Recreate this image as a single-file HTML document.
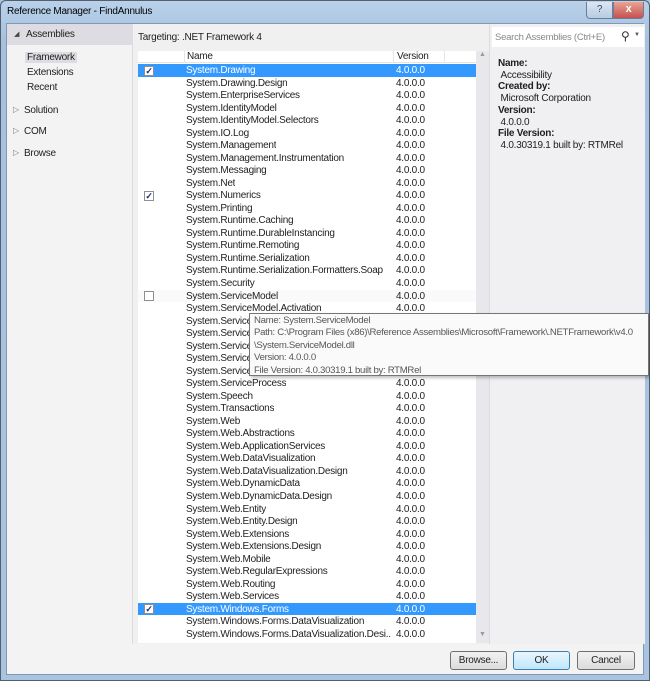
<!DOCTYPE html>
<html><head><meta charset="utf-8"><style>
*{margin:0;padding:0;box-sizing:border-box}
body{width:650px;height:681px;overflow:hidden;font-family:"Liberation Sans",sans-serif;font-size:10px;letter-spacing:-0.25px;color:#1e1e1e;background:#a9c4e0}
.frame{position:absolute;left:0;top:0;width:650px;height:681px;background:linear-gradient(180deg,#b9d1ea 0,#a6c1df 40px,#a9c4e1 100%);border:1px solid #555f6c;border-radius:6px 6px 0 0}
.title{position:absolute;left:6px;top:5px;color:#000}
.hbtn{position:absolute;top:1px;height:17px;border:1px solid #6d7e94;border-top:none}
.client{position:absolute;left:6px;top:23px;width:638px;height:652px;background:#f0f0f0;border:1px solid #8398b4}
.left{position:absolute;left:0;top:0;width:126px;height:620px;background:#f3f3f4;border-right:1px solid #dcdcdc}
.lh{position:absolute;left:0;top:0;width:126px;height:21px;background:#dcdce2}
.t{position:absolute;white-space:nowrap}
.list{position:absolute;left:131px;top:27px;width:338px;height:592px;background:#fff;overflow:hidden}
.row{position:absolute;left:0;width:338px;height:12.53px;line-height:14px}
.row .n{position:absolute;left:48px;max-width:205px;overflow:hidden;white-space:nowrap}
.row .v{position:absolute;left:258px}
.sel{background:#3399ff;color:#fff}
.hov{background:#fafafa}
.cb{position:absolute;left:6px;top:1.5px;width:10px;height:10px;border:1px solid #8f8f8f;background:#fff;font-size:9px;line-height:8px;text-align:center;color:#1b2b7a;font-weight:bold}
.scroll{position:absolute;left:469px;top:27px;width:13px;height:592px;background:#e8e8ec}
.right{position:absolute;left:482px;top:0;width:156px;height:620px;background:#f0f0f2;border-left:1px solid #dcdcdc}
.btn{position:absolute;top:627px;height:19px;border:1px solid #707070;border-radius:3px;background:linear-gradient(#f2f2f2,#dcdcdc);text-align:center;line-height:17px}
.tip{position:absolute;left:249px;top:313px;width:400px;height:63px;background:#fafafa;border:1px solid #767676;box-shadow:2px 2px 3px rgba(0,0,0,.25);color:#575757;padding:1px 4px;line-height:12.4px;font-size:9.6px;letter-spacing:-0.3px;white-space:nowrap;overflow:hidden}
</style></head><body>
<div class="frame">
<div class="title">Reference Manager - FindAnnulus</div>
<div class="hbtn" style="left:585px;width:27px;background:linear-gradient(#dce7f3,#b7cbe2);border-radius:0 0 0 4px;text-align:center;line-height:15px;color:#34496a">?</div>
<div class="hbtn" style="left:612px;width:31px;background:linear-gradient(#e8a493,#c75050);border-radius:0 0 4px 0;text-align:center;color:#fff;font-weight:bold;font-size:11px;line-height:15px">x</div>
</div>
<div class="client">
 <div class="left">
  <div class="lh"></div>
  <div class="t" style="left:7px;top:6px;font-size:7px;color:#444">◢</div>
  <div class="t" style="left:19px;top:5px">Assemblies</div>
  <div class="t" style="top:28px;background:#dcdce2;padding:0 2px;left:18px">Framework</div>
  <div class="t" style="left:20px;top:43px">Extensions</div>
  <div class="t" style="left:20px;top:58px">Recent</div>
  <div class="t" style="left:6px;top:81px;font-size:8px;color:#777">▷</div><div class="t" style="left:17px;top:81px">Solution</div>
  <div class="t" style="left:6px;top:102px;font-size:8px;color:#777">▷</div><div class="t" style="left:17px;top:102px">COM</div>
  <div class="t" style="left:6px;top:124px;font-size:8px;color:#777">▷</div><div class="t" style="left:17px;top:124px">Browse</div>
 </div>
 <div class="t" style="left:131px;top:8px">Targeting: .NET Framework 4</div>
 <div class="list">
  <div style="position:absolute;left:0;top:0;width:338px;height:12px;border-bottom:1px solid #e5e5e5"></div>
  <div style="position:absolute;left:46px;top:0;width:1px;height:12px;background:#e5e5e5"></div>
  <div style="position:absolute;left:255px;top:0;width:1px;height:12px;background:#e5e5e5"></div>
  <div style="position:absolute;left:306px;top:0;width:1px;height:12px;background:#e5e5e5"></div>
  <div class="t" style="left:49px;top:0">Name</div><div class="t" style="left:259px;top:0">Version</div>
  <div id="rows"></div>
 </div>
 <div class="scroll"><div class="t" style="left:3px;top:0;font-size:7px;color:#999">▲</div><div class="t" style="left:3px;top:580px;font-size:7px;color:#999">▼</div></div>
 <div class="right">
  <div style="position:absolute;left:2px;top:3px;width:152px;height:20px;background:#fff"></div>
  <div class="t" style="left:5px;top:8px;color:#888;font-size:9.5px">Search Assemblies (Ctrl+E)</div>
  <div class="t" style="left:131px;top:5px;font-size:12px;color:#333">⚲</div><div class="t" style="left:144px;top:8px;font-size:6px;color:#555">▼</div>
  <div class="t" style="left:8px;top:34px;line-height:11.7px"><b>Name:</b><br>&nbsp;Accessibility<br><b>Created by:</b><br>&nbsp;Microsoft Corporation<br><b>Version:</b><br>&nbsp;4.0.0.0<br><b>File Version:</b><br>&nbsp;4.0.30319.1 built by: RTMRel</div>
 </div>
 <div style="position:absolute;left:0;top:620px;width:636px;height:30px;background:#f3f3f3"></div>
 <div class="btn" style="left:443px;width:57px">Browse...</div>
 <div class="btn" style="left:506px;width:57px;border-color:#3c7fb1;background:linear-gradient(#eaf6fd,#bee6fd)">OK</div>
 <div class="btn" style="left:570px;width:58px">Cancel</div>
</div>
<div class="tip">Name: System.ServiceModel<br>Path: C:\Program Files (x86)\Reference Assemblies\Microsoft\Framework\.NETFramework\v4.0<br>\System.ServiceModel.dll<br>Version: 4.0.0.0<br>File Version: 4.0.30319.1 built by: RTMRel</div>
<script>
var names=["System.Drawing","System.Drawing.Design","System.EnterpriseServices","System.IdentityModel","System.IdentityModel.Selectors","System.IO.Log","System.Management","System.Management.Instrumentation","System.Messaging","System.Net","System.Numerics","System.Printing","System.Runtime.Caching","System.Runtime.DurableInstancing","System.Runtime.Remoting","System.Runtime.Serialization","System.Runtime.Serialization.Formatters.Soap","System.Security","System.ServiceModel","System.ServiceModel.Activation","System.ServiceModel.Channels","System.ServiceModel.Discovery","System.ServiceModel.Routing","System.ServiceModel.Web","System.ServiceModel.Web","System.ServiceProcess","System.Speech","System.Transactions","System.Web","System.Web.Abstractions","System.Web.ApplicationServices","System.Web.DataVisualization","System.Web.DataVisualization.Design","System.Web.DynamicData","System.Web.DynamicData.Design","System.Web.Entity","System.Web.Entity.Design","System.Web.Extensions","System.Web.Extensions.Design","System.Web.Mobile","System.Web.RegularExpressions","System.Web.Routing","System.Web.Services","System.Windows.Forms","System.Windows.Forms.DataVisualization","System.Windows.Forms.DataVisualization.Desi..."];
var h="";names.forEach(function(n,i){var c=(i==0||i==43)?"row sel":(i==18?"row hov":"row");var cb=(i==0||i==10||i==43)?'<div class="cb">✓</div>':(i==18?'<div class="cb"></div>':'');h+='<div class="'+c+'" style="top:'+(13+i*12.53)+'px">'+cb+'<span class="n">'+n+'</span><span class="v">4.0.0.0</span></div>';});
document.getElementById("rows").innerHTML=h;
</script>
</body></html>
